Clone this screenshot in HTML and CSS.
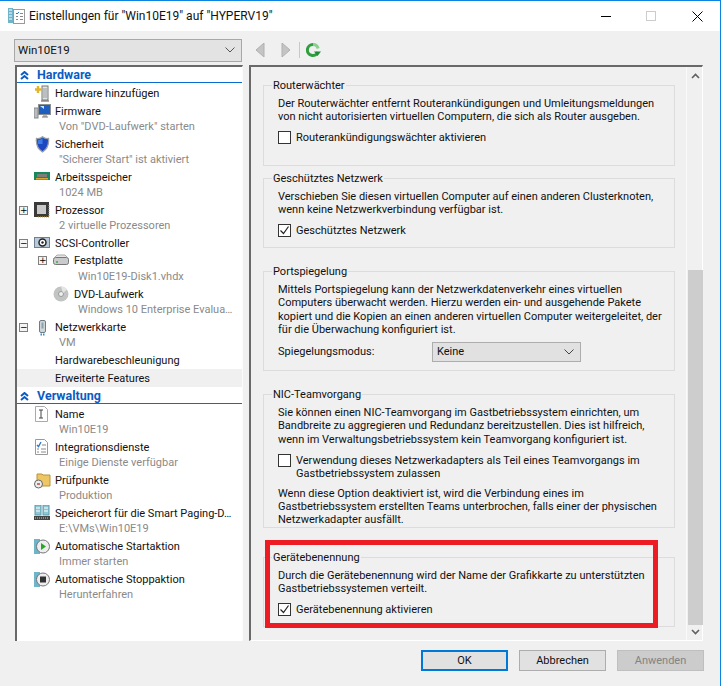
FILE: index.html
```html
<!DOCTYPE html>
<html lang="de">
<head>
<meta charset="utf-8">
<title>Einstellungen</title>
<link rel="stylesheet" href="styles.css">
</head>
<body>
<div class="window">
  <header class="titlebar">
    <svg class="title-icon" width="17" height="18" viewBox="0 0 17 18"><rect x="0" y="1" width="5" height="15" fill="#6fb5c9"/><path d="M1 3h3M1 6h3M1 9h3M1 12h3" stroke="#fff"/><rect x="5.500" y="2.500" width="11" height="14" fill="#fff" stroke="#9a9a9a"/><path d="M8 6l1 1 2-2" stroke="#2a7bd0" fill="none"/><path d="M12 6.500h3M12 9.500h3M8 9.500h2M8 12.500h2M12 12.500h3" stroke="#888"/></svg>
    <span class="title-text">Einstellungen für "Win10E19" auf "HYPERV19"</span>
    <div class="win-controls">
      <svg width="11" height="11" viewBox="0 0 11 11"><path d="M0 5.500h10" stroke="#000"/></svg>
      <svg width="10" height="10" viewBox="0 0 10 10"><rect x=".5" y=".5" width="9" height="9" fill="none" stroke="#ccc"/></svg>
      <svg width="11" height="11" viewBox="0 0 11 11"><path d="M.5.500l10 10M10.500.500l-10 10" stroke="#000"/></svg>
    </div>
  </header>

  <div class="toolbar">
    <div class="combo vm-combo"><span>Win10E19</span><svg width="10" height="6" viewBox="0 0 10 6"><path d="M.5.500L5 5 9.500.500" fill="none" stroke="#555"/></svg></div>
    <div class="nav-icons">
      <svg width="9" height="14" viewBox="0 0 9 14"><path d="M8 0v14L0 7z" fill="#c4c4c4" stroke="#b0b0b0"/></svg>
      <svg width="9" height="14" viewBox="0 0 9 14"><path d="M1 0v14l8-7z" fill="#c4c4c4" stroke="#b0b0b0"/></svg>
      <span class="nav-sep"></span>
      <svg width="16" height="16" viewBox="0 0 16 16"><path d="M8 2.500a5.500 5.500 0 1 0 5 7.500" fill="none" stroke="#2f9e3f" stroke-width="3"/><path d="M8 2.500a5.500 5.500 0 0 1 5.200 4" fill="none" stroke="#8ad08f" stroke-width="3"/><path d="M9 9.500h7L12.500 14z" fill="#1f8f32"/></svg>
    </div>
  </div>

  <main class="panes">
    <nav class="tree">
      <div class="section"><svg class="chev" width="9" height="9" viewBox="0 0 9 9"><path d="M1 4l3.500-3L8 4M1 8l3.500-3L8 8" fill="none" stroke="#0a5cc4" stroke-width="2"/></svg><span>Hardware</span></div>

      <div class="item single"><span class="exp"></span>
        <svg class="ico" width="17" height="17" viewBox="0 0 17 17"><rect x="8" y="1" width="6" height="14" fill="#dfe4e6" stroke="#777"/><path d="M10 3v10M12 3v10" stroke="#999"/><path d="M7 16h8" stroke="#555"/><path d="M4 1v7M1 4.500h7" stroke="#e2b52b" stroke-width="2.400"/></svg>
        <div class="label"><b>Hardware hinzufügen</b></div></div>

      <div class="item"><span class="exp"></span>
        <svg class="ico" width="17" height="17" viewBox="0 0 17 17"><rect x="0" y="5" width="4" height="10" fill="#b8bdbf" stroke="#888"/><rect x="4.500" y="1.500" width="12" height="10" fill="#1f5fbf" stroke="#8a8f92"/><path d="M6 3h4v3z" fill="#cfe4ff"/><path d="M8 14h6M10 12v2M12 12v2" stroke="#777"/></svg>
        <div class="label"><b>Firmware</b><i>Von "DVD-Laufwerk" starten</i></div></div>

      <div class="item"><span class="exp"></span>
        <svg class="ico" width="17" height="17" viewBox="0 0 17 17"><path d="M2.500 2.500Q6 3 8.500.800q2.500 2.200 6 1.700 1 9-6 13.500-7-4.500-6-13.500z" fill="#1c49c2" stroke="#9ba0a6" stroke-width="1.300"/><path d="M4 4q3 0 4.500-2v6H4z" fill="#3f7be6"/></svg>
        <div class="label"><b>Sicherheit</b><i>"Sicherer Start" ist aktiviert</i></div></div>

      <div class="item"><span class="exp"></span>
        <svg class="ico" width="17" height="17" viewBox="0 0 17 17"><rect x="0" y="3" width="16" height="8" fill="#17885a"/><rect x="3" y="5" width="10" height="3" fill="#222"/><path d="M4 5v3M6 5v3M8 5v3M10 5v3M12 5v3" stroke="#d8d8d8"/><rect x="2" y="9" width="12" height="1.500" fill="#d9a62e"/></svg>
        <div class="label"><b>Arbeitsspeicher</b><i>1024 MB</i></div></div>

      <div class="item"><span class="exp"><span class="box">+</span></span>
        <svg class="ico" width="17" height="17" viewBox="0 0 17 17"><rect x="0" y="0" width="15" height="15" fill="#3a3a3a"/><rect x="3" y="3" width="9" height="9" fill="#c9c9c9"/><path d="M15 3v12H3" stroke="#c9a53a" fill="none" stroke-dasharray="1 1"/></svg>
        <div class="label"><b>Prozessor</b><i>2 virtuelle Prozessoren</i></div></div>

      <div class="item single short"><span class="exp"><span class="box">−</span></span>
        <svg class="ico" width="17" height="17" viewBox="0 0 17 17"><rect x=".5" y="2.500" width="15" height="10" fill="#b9c9d8" stroke="#6d8196"/><circle cx="8.500" cy="7.500" r="3.500" fill="#fff" stroke="#222" stroke-width="1.500"/><circle cx="8.500" cy="7.500" r="1.200" fill="#222"/></svg>
        <div class="label"><b>SCSI-Controller</b></div></div>

      <div class="item nested tall"><span class="exp"><span class="box">+</span></span>
        <svg class="ico" width="17" height="17" viewBox="0 0 17 17"><rect x=".5" y="5.500" width="15" height="7" rx="2" fill="#c8cacb" stroke="#777"/><path d="M2 5l2-2h8l2 2" fill="#e4e4e4" stroke="#aaa"/><rect x="3" y="9" width="2" height="2" fill="#5cb85c"/></svg>
        <div class="label"><b>Festplatte</b><i>Win10E19-Disk1.vhdx</i></div></div>

      <div class="item nested"><span class="exp"></span>
        <svg class="ico" width="17" height="17" viewBox="0 0 17 17"><circle cx="8" cy="8" r="7.500" fill="#c2c4c4"/><circle cx="8" cy="8" r="2.500" fill="#eee" stroke="#999"/><path d="M8 .5a7.500 7.500 0 0 1 6 3L10 7z" fill="#e4e6e4"/></svg>
        <div class="label"><b>DVD-Laufwerk</b><i>Windows 10 Enterprise Evalua…</i></div></div>

      <div class="item"><span class="exp"><span class="box">−</span></span>
        <svg class="ico" width="17" height="17" viewBox="0 0 17 17"><rect x="5.500" y="1.500" width="6" height="12" rx="1.500" fill="#cfd6da" stroke="#6f7c84"/><path d="M7.500 3.500h2v6h-2z" fill="#8fa0aa"/><path d="M6.500 15.500h1.500M9 15.500h1.500" stroke="#2a8fd8" stroke-width="2"/></svg>
        <div class="label"><b>Netzwerkkarte</b><i>VM</i></div></div>

      <div class="item single flat"><div class="label"><b>Hardwarebeschleunigung</b></div></div>
      <div class="item single flat current"><div class="label"><b>Erweiterte Features</b></div></div>

      <div class="section second"><svg class="chev" width="9" height="9" viewBox="0 0 9 9"><path d="M1 4l3.500-3L8 4M1 8l3.500-3L8 8" fill="none" stroke="#0a5cc4" stroke-width="2"/></svg><span>Verwaltung</span></div>

      <div class="item"><span class="exp"></span>
        <svg class="ico" width="17" height="17" viewBox="0 0 17 17"><path d="M1.500.500h9l3 3v12h-12z" fill="#fff" stroke="#aaa"/><path d="M5 4h4M5 12h4M7 4v8" stroke="#444"/></svg>
        <div class="label"><b>Name</b><i>Win10E19</i></div></div>

      <div class="item"><span class="exp"></span>
        <svg class="ico" width="17" height="17" viewBox="0 0 17 17"><path d="M1.500.500h9l3 3v12h-12z" fill="#fff" stroke="#999"/><path d="M3 6l1.500 1.500L7 3" stroke="#2a7bd0" stroke-width="1.400" fill="none"/><path d="M8 6h4M3 10h2M7 10h5M3 13h2M7 13h5" stroke="#888"/></svg>
        <div class="label"><b>Integrationsdienste</b><i>Einige Dienste verfügbar</i></div></div>

      <div class="item"><span class="exp"></span>
        <svg class="ico" width="17" height="17" viewBox="0 0 17 17"><path d="M3 2h5l1 1h7v11H3z" fill="#eec664" stroke="#b8923a"/><circle cx="4.500" cy="12" r="4" fill="#eee" stroke="#666"/><path d="M3 12h3" stroke="#c33" stroke-width="1.400"/></svg>
        <div class="label"><b>Prüfpunkte</b><i>Produktion</i></div></div>

      <div class="item"><span class="exp"></span>
        <svg class="ico" width="17" height="17" viewBox="0 0 17 17"><rect x="1" y="0" width="6" height="10" fill="#8cc7d3" stroke="#5f9aa8"/><rect x="9" y="0" width="6" height="10" fill="#8cc7d3" stroke="#5f9aa8"/><path d="M2 3h4M2 6h4M10 3h4M10 6h4" stroke="#fff"/><rect x="0" y="11" width="16" height="4" fill="#444"/><path d="M1 13h14" stroke="#ccc" stroke-dasharray="1 1"/></svg>
        <div class="label"><b>Speicherort für die Smart Paging-D…</b><i>E:\VMs\Win10E19</i></div></div>

      <div class="item"><span class="exp"></span>
        <svg class="ico" width="17" height="17" viewBox="0 0 17 17"><rect x="0" y="1" width="6" height="15" fill="#6fb5c9"/><circle cx="9" cy="8.500" r="6.500" fill="#eee" stroke="#777"/><path d="M7 5l5 3.500-5 3.500z" fill="#2aa52a"/></svg>
        <div class="label"><b>Automatische Startaktion</b><i>Immer starten</i></div></div>

      <div class="item"><span class="exp"></span>
        <svg class="ico" width="17" height="17" viewBox="0 0 17 17"><rect x="0" y="1" width="6" height="15" fill="#6fb5c9"/><circle cx="9" cy="8.500" r="6.500" fill="#eee" stroke="#777"/><rect x="6" y="5.500" width="6" height="6" fill="#333"/></svg>
        <div class="label"><b>Automatische Stoppaktion</b><i>Herunterfahren</i></div></div>
    </nav>

    <section class="detail">
      <div class="detail-scroll">
        <div class="group g-router">
          <h3>Routerwächter</h3>
          <p>Der Routerwächter entfernt Routerankündigungen und Umleitungsmeldungen<br>von nicht autorisierten virtuellen Computern, die sich als Router ausgeben.</p>
          <label class="check"><span class="cb"></span><span>Routerankündigungswächter aktivieren</span></label>
        </div>
        <div class="group g-protect">
          <h3>Geschütztes Netzwerk</h3>
          <p>Verschieben Sie diesen virtuellen Computer auf einen anderen Clusterknoten,<br>wenn keine Netzwerkverbindung verfügbar ist.</p>
          <label class="check"><span class="cb on"><svg width="11" height="11" viewBox="0 0 11 11"><path d="M1.500 5.500l3 3 5-7" fill="none" stroke="#222" stroke-width="1.200"/></svg></span><span>Geschütztes Netzwerk</span></label>
        </div>
        <div class="group g-port">
          <h3>Portspiegelung</h3>
          <p>Mittels Portspiegelung kann der Netzwerkdatenverkehr eines virtuellen<br>Computers überwacht werden. Hierzu werden ein- und ausgehende Pakete<br>kopiert und die Kopien an einen anderen virtuellen Computer weitergeleitet, der<br>für die Überwachung konfiguriert ist.</p>
          <div class="mode"><span class="mode-label">Spiegelungsmodus:</span><div class="combo mode-combo"><span>Keine</span><svg width="10" height="6" viewBox="0 0 10 6"><path d="M.5.500L5 5 9.500.500" fill="none" stroke="#444"/></svg></div></div>
        </div>
        <div class="group g-nic">
          <h3>NIC-Teamvorgang</h3>
          <p>Sie können einen NIC-Teamvorgang im Gastbetriebssystem einrichten, um<br>Bandbreite zu aggregieren und Redundanz bereitzustellen. Dies ist hilfreich,<br>wenn im Verwaltungsbetriebssystem kein Teamvorgang konfiguriert ist.</p>
          <label class="check top"><span class="cb"></span><span>Verwendung dieses Netzwerkadapters als Teil eines Teamvorgangs im<br>Gastbetriebssystem zulassen</span></label>
          <p class="after">Wenn diese Option deaktiviert ist, wird die Verbindung eines im<br>Gastbetriebssystem erstellten Teams unterbrochen, falls einer der physischen<br>Netzwerkadapter ausfällt.</p>
        </div>
        <div class="group g-name">
          <h3>Gerätebenennung</h3>
          <p>Durch die Gerätebenennung wird der Name der Grafikkarte zu unterstützten<br>Gastbetriebssystemen verteilt.</p>
          <label class="check"><span class="cb on"><svg width="11" height="11" viewBox="0 0 11 11"><path d="M1.500 5.500l3 3 5-7" fill="none" stroke="#222" stroke-width="1.200"/></svg></span><span>Gerätebenennung aktivieren</span></label>
        </div>
      </div>
      <div class="scrollbar">
        <svg width="9" height="6" viewBox="0 0 9 6"><path d="M1 5l3.500-3.500L8 5" fill="none" stroke="#606060" stroke-width="1.600"/></svg>
        <div class="thumb"></div>
        <svg width="9" height="6" viewBox="0 0 9 6"><path d="M1 1l3.500 3.500L8 1" fill="none" stroke="#606060" stroke-width="1.600"/></svg>
      </div>
      <div class="highlight"></div>
    </section>
  </main>

  <footer class="buttons">
    <button class="btn primary">OK</button>
    <button class="btn">Abbrechen</button>
    <button class="btn disabled">Anwenden</button>
  </footer>
</div>
</body>
</html>
```
FILE: styles.css
```css
* { box-sizing: border-box; }
html, body { margin: 0; padding: 0; }
body { background: #f0f0f0; font: 11px/14px Roboto, "Open Sans", sans-serif; color: #111; }
.window { width: 721px; height: 686px; display: flex; flex-direction: column; background: #f0f0f0; border-top: 1px solid #0a84e0; border-right: 1px solid #0a84e0; overflow: hidden; }

.titlebar { height: 30px; flex: none; background: #fff; display: flex; align-items: center; padding-left: 8px; }
.title-icon { flex: none; margin-right: 4px; }
.title-text { color: #111; font-size: 12px; }
.win-controls { margin-left: auto; display: flex; align-items: center; gap: 34px; padding-right: 17px; }
.win-controls svg:last-child { margin-left: 2px; }

.toolbar { height: 34px; flex: none; display: flex; align-items: center; padding: 4px 0 0 14px; }
.combo { display: flex; align-items: center; justify-content: space-between; background: #e3e3e3; border: 1px solid #a8a8a8; }
.vm-combo { width: 228px; height: 23px; padding: 0 6px 0 3px; font-size: 11.500px; }
.nav-icons { display: flex; align-items: center; margin-left: 14px; }
.nav-icons svg:nth-child(2) { margin-left: 16px; }
.nav-sep { width: 1px; height: 16px; background: #c8c8c8; margin: 0 5px 0 9px; }

.panes { height: 576px; flex: none; display: flex; margin: 0 0 0 15px; }

.tree { width: 228px; flex: none; background: #fff; border-left: 2px solid #696969; border-top: 2px solid #696969; border-right: 1px solid #fbfbfb; }
.section { height: 14px; padding-top: 1px; display: flex; align-items: center; gap: 8px; padding-left: 3px; border-bottom: 1px solid #0a6cd0; color: #0a5cc4; font-weight: 700; font-size: 12.500px; box-sizing: content-box; margin-bottom: 1px; line-height: 14px; }
.section.second { margin-top: 1px; }
.item { display: flex; height: 33px; align-items: flex-start; }
.item.single { height: 18px; }
.item.short { height: 17px; }
.item.tall { height: 34px; }
.exp { width: 17px; flex: none; display: flex; padding: 5px 0 0 2px; }
.box { width: 9px; height: 9px; border: 1px solid #808080; background: #f4f4f4; font: 9px/7px "DejaVu Sans", sans-serif; text-align: center; color: #000; display: block; }
.ico { flex: none; margin-right: 4px; margin-top: 1px; }
.label { white-space: nowrap; min-width: 0; padding-top: 3px; }
.label b { display: block; font-weight: 400; line-height: 14px; height: 14px; }
.label i { display: block; font-style: normal; color: #8a8a8a; line-height: 15px; padding-left: 4px; }
.tall .label i { margin-top: 1px; }
.item.nested { padding-left: 19px; }
.item.flat { padding-left: 38px; }
.item.flat.current { background: #f0f0f0; }

.detail { width: 454px; flex: none; margin-left: 6px; display: flex; position: relative; border-left: 2px solid #696969; border-top: 2px solid #696969; border-right: 1px solid #fff; border-bottom: 1px solid #fff; background: #f0f0f0; }
.detail-scroll { width: 436px; flex: none; height: 100%; padding: 18px 0 0 12px; overflow: hidden; border-right: 1px solid #fafafa; }
.group { width: 412px; border: 1px solid #dcdcdc; position: relative; padding: 11px 14px 0 14px; }
.group h3 { position: absolute; top: -7px; left: 8px; margin: 0; padding: 0 1px; background: #f0f0f0; font-weight: 400; font-size: 11px; line-height: 14px; }
.group p { margin: 0; line-height: 13.330px; white-space: nowrap; }
.g-router { height: 81px; }
.g-protect { height: 70px; margin-top: 12px; }
.g-port { height: 100px; margin-top: 23px; }
.g-nic { height: 134px; margin-top: 23px; }
.g-name { height: 70px; margin-top: 29px; }
.check { display: flex; align-items: center; gap: 5px; margin-top: 7px; white-space: nowrap; }
.check.top { align-items: flex-start; margin-top: 8px; line-height: 13.330px; }
.cb { width: 13px; height: 13px; flex: none; border: 1px solid #333; background: #fff; display: flex; align-items: center; justify-content: center; }
.group p.after { margin-top: 6px; }
.mode { display: flex; align-items: center; margin-top: 6px; }
.mode-label { width: 154px; flex: none; }
.mode-combo { width: 149px; height: 20px; padding: 0 6px 0 4px; background: #e1e1e1; border-color: #adadad; }

.scrollbar { width: 17px; flex: none; display: flex; flex-direction: column; align-items: center; padding-top: 6px; }
.thumb { width: 15px; height: 355px; background: #cdcdcd; margin-top: 191px; margin-bottom: 4px; flex: none; }

.highlight { position: absolute; left: 14px; top: 473px; width: 393px; height: 88px; border: 5px solid #ed1c24; pointer-events: none; }

.buttons { flex: none; display: flex; gap: 11px; padding: 9px 16px 0 0; justify-content: flex-end; }
.btn { width: 87px; height: 21px; padding: 0; background: #e1e1e1; border: 1px solid #adadad; font: inherit; color: #111; }
.btn.primary { border: 2px solid #0078d7; }
.btn.disabled { background: #ccc; border-color: #bfbfbf; color: #838383; }
```
